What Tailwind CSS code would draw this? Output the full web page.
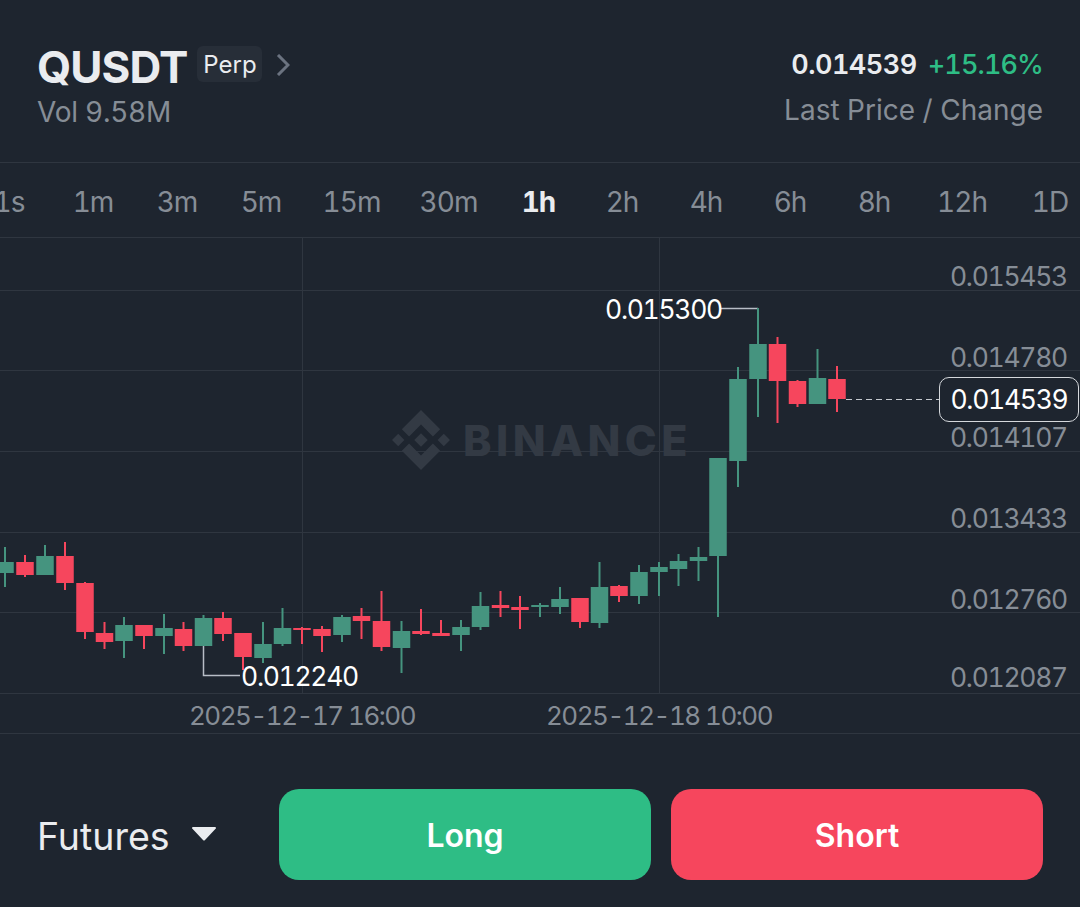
<!DOCTYPE html>
<html lang="en">
  <head>
    <meta charset="UTF-8" />
    <meta name="viewport" content="width=device-width, initial-scale=1.0" />
    <title>QUSDT Perp</title>
    <script src="https://cdn.jsdelivr.net/npm/@tailwindcss/browser@4"></script>
  </head>
  <body class="bg-[#1e252f] font-['Inter',sans-serif] tabular-nums w-[1080px] h-[907px] overflow-hidden">
    <!-- header -->
    <div class="h-[163px] border-b border-[#2f3640] pl-[37px] pr-[37px] flex justify-between">
      <div class="pt-[45px]">
        <div class="flex items-start">
          <span class="text-[44px] leading-[44px] font-bold text-[#eaecef] tracking-[-0.9px]">QUSDT</span>
          <span class="ml-[10px] mt-[1px] w-[65px] h-[36px] rounded-md bg-[#272e38] text-[#eaecef] text-[24px] leading-[37px] text-center">Perp</span>
          <svg class="ml-[14px] mt-[9px]" width="14" height="22" viewBox="0 0 14 22" fill="none" stroke="#6b7380" stroke-width="3"><path d="M2 1l10 10-10 10" /></svg>
        </div>
        <div class="mt-[7px] text-[28px] leading-[32px] tracking-[-0.25px] text-[#868d96]">Vol 9.58M</div>
      </div>
      <div class="pt-[48px] text-right">
        <div class="flex justify-end gap-[11px] text-[27px] leading-[34px] font-semibold text-[#eaecef]">
          <span class="tracking-[-0.5px]">0.014539</span>
          <span class="text-[#2ebd85] font-medium tracking-[-0.9px]">+15.16%</span>
        </div>
        <div class="mt-[11px] text-[28px] leading-[34px] text-[#868d96]">Last Price / Change</div>
      </div>
    </div>

    <!-- intervals -->
    <div class="h-[75px] border-b border-[#2f3640] flex items-center -ml-[33px] pt-[3px] whitespace-nowrap text-[28px] tracking-[-1px] text-[#868d96]">
      <span class="w-[84px] shrink-0 text-center">1s</span>
      <span class="w-[84px] shrink-0 text-center">1m</span>
      <span class="w-[84px] shrink-0 text-center">3m</span>
      <span class="w-[84px] shrink-0 text-center">5m</span>
      <span class="w-[97px] shrink-0 text-center">15m</span>
      <span class="w-[97px] shrink-0 text-center">30m</span>
      <span class="w-[83px] shrink-0 text-center text-[#eaecef] font-bold">1h</span>
      <span class="w-[84px] shrink-0 text-center">2h</span>
      <span class="w-[84px] shrink-0 text-center">4h</span>
      <span class="w-[84px] shrink-0 text-center">6h</span>
      <span class="w-[84px] shrink-0 text-center">8h</span>
      <span class="w-[92px] shrink-0 text-center">12h</span>
      <span class="w-[84px] shrink-0 text-center">1D</span>
    </div>

    <!-- chart -->
    <div class="relative h-[496px] border-b border-[#2f3640] tracking-[-1.3px]">
      <svg id="chart" class="absolute left-0 top-[-238px]" width="1080" height="733" viewBox="0 0 1080 733"></svg>

      <div class="absolute left-[391px] top-[172px] flex items-center gap-[12px] tracking-normal">
        <svg width="60" height="60" viewBox="0 0 58 58" fill="#333a44">
          <path d="M29 0l18.5 18.5-7 7L29 14 17.5 25.500l-7-7z" />
          <path d="M29 58L10.500 39.500l7-7L29 44l11.500-11.500 7 7z" />
          <path d="M29 22.500l6.500 6.500-6.500 6.500-6.500-6.500z" />
          <path d="M7 23l6 6-6 6-6-6z" />
          <path d="M51 23l6 6-6 6-6-6z" />
        </svg>
        <span class="text-[43px] leading-none font-extrabold tracking-[4.400px] text-[#333a44]">BINANCE</span>
      </div>

      <span class="absolute right-[13px] top-[21px] text-[26.500px] leading-[34px] text-[#868d96]">0.015453</span>
      <span class="absolute right-[13px] top-[102px] text-[26.500px] leading-[34px] text-[#868d96]">0.014780</span>
      <span class="absolute right-[13px] top-[182px] text-[26.500px] leading-[34px] text-[#868d96]">0.014107</span>
      <span class="absolute right-[13px] top-[263px] text-[26.500px] leading-[34px] text-[#868d96]">0.013433</span>
      <span class="absolute right-[13px] top-[344px] text-[26.500px] leading-[34px] text-[#868d96]">0.012760</span>
      <span class="absolute right-[13px] top-[422px] text-[26.500px] leading-[34px] text-[#868d96]">0.012087</span>

      <span class="absolute left-[939px] top-[139px] w-[140px] h-[45px] rounded-[10px] border border-[#d5d8dc] bg-[#1e252f] text-[26.500px] leading-[43px] text-center text-white">0.014539</span>

      <span class="absolute left-[605px] top-[54px] text-[26.500px] leading-[34px] text-white">0.015300</span>
      <span class="absolute left-[241px] top-[421px] text-[26.500px] leading-[34px] text-white">0.012240</span>

      <span class="absolute left-[302px] -translate-x-1/2 top-[461px] whitespace-nowrap text-[26px] leading-[34px] tracking-[-1.5px] text-[#868d96]">2025-12-17 16:00</span>
      <span class="absolute left-[659px] -translate-x-1/2 top-[461px] whitespace-nowrap text-[26px] leading-[34px] tracking-[-1.5px] text-[#868d96]">2025-12-18 10:00</span>
    </div>

    <!-- footer -->
    <div class="pt-[55px] pl-[37px] flex items-start">
      <span class="w-[242px] flex items-center text-[37.500px] leading-[91px] text-[#eaecef]">
        <span class="pt-[2px]">Futures</span>
        <svg class="ml-[22px] mb-[3px]" width="24" height="14" viewBox="0 0 24 14" fill="#eaecef"><path d="M1 0h22a1 1 0 0 1 .8 1.600L13 13a1.400 1.400 0 0 1-2 0L.2 1.600A1 1 0 0 1 1 0z" /></svg>
      </span>
      <button class="w-[372px] h-[91px] pt-[2px] rounded-[20px] bg-[#2ebd85] text-white text-[32px] font-semibold">Long</button>
      <button class="ml-[20px] w-[372px] h-[91px] pt-[2px] rounded-[20px] bg-[#f6465d] text-white text-[32px] font-semibold">Short</button>
    </div>

    <script>
      // x, wick top, wick bottom, body top, body bottom, up?
      const candles = [
        [5, 547, 587, 562, 573, 1], [25, 555, 577, 562, 575, 0], [45, 545, 575, 556, 575, 1],
        [65, 542, 590, 556, 583, 0], [85, 582, 639, 583, 632, 0], [104.5, 622, 649, 633, 642, 0],
        [124, 617, 658, 625, 641, 1], [144, 625, 649, 625, 636, 0], [164, 614, 654, 628, 636, 1],
        [183.5, 622, 651, 629, 646, 0], [203.5, 615, 646, 618, 646, 1], [223, 612, 641, 618, 634, 0],
        [243, 633, 670, 633, 657, 0], [263, 622, 663, 644, 658, 1], [282.5, 608, 646, 628, 644, 1],
        [302, 627, 644, 628, 630, 0], [322, 626, 652, 629, 636, 0], [342, 615, 642, 617, 635, 1],
        [361.5, 608, 639, 616, 621, 0], [381.5, 591, 651, 621, 647, 0], [401.5, 621, 673, 631, 648, 1],
        [421, 609, 635, 631, 634, 0], [441, 620, 636, 633, 636, 0], [461, 620, 651, 627, 635, 1],
        [480.5, 592, 630, 606, 627, 1], [500.5, 591, 617, 605, 608, 0], [520, 596, 629, 607, 610, 0],
        [540, 603, 617, 605, 607, 1], [560, 587, 614, 599, 607, 1], [580, 598, 628, 598, 622, 0],
        [599.5, 562, 628, 587, 623, 1], [619, 585, 602, 586, 596, 0], [639, 565, 604, 572, 596, 1],
        [659, 562, 596, 567, 572, 1], [678.5, 554, 586, 561, 569, 1], [698.5, 547, 581, 557, 561, 1],
        [718, 458, 617, 458, 556, 1], [738, 367, 487, 379, 461, 1], [758, 308, 417, 344, 379, 1],
        [777.5, 337, 423, 344, 381, 0], [797.5, 380, 407, 381, 404, 0], [817.5, 349, 404, 378, 404, 1],
        [837, 366, 412, 379, 399, 0],
      ];

      let svg = "";
      for (const y of [290, 370, 451, 532, 612, 693]) {
        svg += `<rect x="0" y="${y}" width="1080" height="1" fill="#2f3640"/>`;
      }
      for (const x of [302, 659]) {
        svg += `<rect x="${x}" y="238" width="1" height="456" fill="#2f3640"/>`;
      }
      // high / low leaders and last price line
      svg += `<path d="M721 308.500H758M203.500 646V675.500H240" fill="none" stroke="#b7bdc6" stroke-width="1.500"/>`;
      svg += `<path d="M846 399.500H939" fill="none" stroke="#c5c9cf" stroke-dasharray="6 4"/>`;
      for (const [x, wt, wb, bt, bb, up] of candles) {
        const color = up ? "#45947f" : "#f6465d";
        svg += `<rect x="${x - 1}" y="${wt}" width="2" height="${wb - wt}" fill="${color}"/>`;
        svg += `<rect x="${x - 8.75}" y="${bt}" width="17.500" height="${bb - bt}" fill="${color}"/>`;
      }
      document.getElementById("chart").innerHTML = svg;
    </script>
  </body>
</html>
